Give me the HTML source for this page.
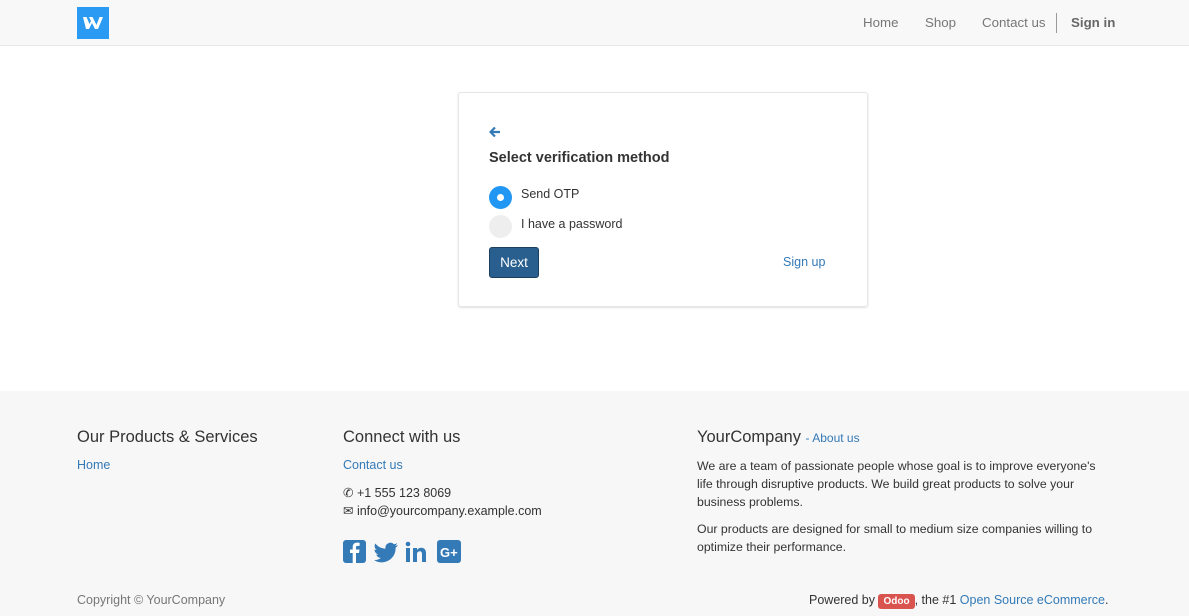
<!DOCTYPE html>
<html><head><style>
*{box-sizing:border-box;margin:0;padding:0}
body{width:1189px;height:616px;overflow:hidden;font-family:"Liberation Sans",sans-serif;font-size:12.5px;color:#333;background:#fff;position:relative}
a{color:#337ab7;text-decoration:none}
.hdr{position:absolute;left:0;top:0;width:1189px;height:46px;background:#f8f8f8;border-bottom:1px solid #e7e7e7}
.nav{position:absolute;top:15px;font-size:13.3px;color:#777}
.card{position:absolute;left:458px;top:92px;width:410px;height:215px;border:1px solid #e5e5e5;border-radius:3px;box-shadow:0 1px 2px rgba(0,0,0,.12)}
.radio{position:absolute;width:23px;height:23px;border-radius:50%}
.ft{position:absolute;left:0;top:391px;width:1189px;height:225px;background:#f7f7f7}
.abs{position:absolute}
h4{font-weight:normal;font-size:16.5px;color:#333;position:absolute}
</style></head><body>
<div class="hdr">
<svg class="abs" style="left:77px;top:7px" width="32" height="32" viewBox="0 0 32 32"><rect width="32" height="32" fill="#2b9af3"/><path d="M6 10h3.500l3 7 1.500-3-2-4h3.500l4 8 3-8H26l-5 12h-3l-3-6-3 6H9z" fill="#fff"/></svg>
<span class="nav" style="left:863px">Home</span>
<span class="nav" style="left:925px">Shop</span>
<span class="nav" style="left:982px">Contact us</span>
<div class="abs" style="left:1056px;top:13px;width:1px;height:20px;background:#999"></div>
<span class="nav" style="left:1071px;font-weight:bold;color:#666">Sign in</span>
</div>
<div class="card">
<svg class="abs" style="left:30px;top:33px" width="12" height="12" viewBox="0 0 12 12"><path d="M11 6H2M6 1.500 1.500 6 6 10.500" stroke="#337ab7" stroke-width="2.200" fill="none"/></svg>
<div class="abs" style="left:30px;top:57px;font-size:14.5px;font-weight:bold">Select verification method</div>
<div class="radio" style="left:30px;top:93px;background:#2196f3"><div class="abs" style="left:8px;top:8px;width:7px;height:7px;border-radius:50%;background:#fff"></div></div>
<div class="abs" style="left:62px;top:94px">Send OTP</div>
<div class="radio" style="left:30px;top:122px;background:#eee"></div>
<div class="abs" style="left:62px;top:124px">I have a password</div>
<div class="abs" style="left:30px;top:154px;width:50px;height:31px;background:#285f8f;border:1px solid #1d3f5e;border-radius:3px;color:#fff;text-align:center;line-height:29px;font-size:13.5px">Next</div>
<a class="abs" style="left:324px;top:162px">Sign up</a>
</div>
<div class="ft">
<h4 style="left:77px;top:37px">Our Products &amp; Services</h4>
<a class="abs" style="left:77px;top:67px">Home</a>
<h4 style="left:343px;top:37px">Connect with us</h4>
<a class="abs" style="left:343px;top:67px">Contact us</a>
<div class="abs" style="left:343px;top:94px">✆ +1 555 123 8069</div>
<div class="abs" style="left:343px;top:112px">✉ info@yourcompany.example.com</div>
<svg class="abs" style="left:343px;top:149px" width="120" height="24" viewBox="0 0 120 24">
<rect x="0" y="0" width="23" height="23" rx="3" fill="#337ab7"/><path d="M13 23V13h3l.5-3.500H13V7.500c0-1 .3-1.600 1.700-1.600h1.900V2.800C16 2.700 15 2.600 14 2.600c-2.600 0-4.300 1.600-4.300 4.400V9.500H7V13h2.700v10z" fill="#fff"/>
<path d="M55 5c-1 .5-2 .7-3 .8 1-.6 1.800-1.600 2.200-2.700-1 .6-2 1-3.200 1.200A5 5 0 0 0 42.500 8.700 14 14 0 0 1 32.300 3.500a5 5 0 0 0 1.500 6.600c-.8 0-1.600-.3-2.300-.6 0 2.400 1.700 4.400 4 4.900-.7.2-1.500.2-2.200.1.600 2 2.500 3.400 4.600 3.400A10 10 0 0 1 31 20.100 14 14 0 0 0 52.600 8.300V7.700C53.600 7 54.400 6.100 55 5z" fill="#337ab7"/>
<rect x="63" y="8" width="4" height="14" fill="#337ab7"/><circle cx="65" cy="4" r="2.300" fill="#337ab7"/><path d="M70 8h4v2c1-1.500 2.500-2.300 4.300-2.300 3 0 4.700 2 4.700 5.500V22h-4v-8c0-1.800-.7-2.800-2.200-2.800S74 12.300 74 14v8h-4z" fill="#337ab7"/>
<rect x="94" y="0" width="24" height="23" rx="3" fill="#337ab7"/><text x="97" y="17" font-family="Liberation Sans" font-weight="bold" font-size="13" fill="#fff">G+</text>
</svg>
<h4 style="left:697px;top:37px">YourCompany <span style="font-size:12px;color:#337ab7">- About us</span></h4>
<div class="abs" style="left:697px;top:66px;width:412px;line-height:18px;font-size:12.3px">We are a team of passionate people whose goal is to improve everyone's life through disruptive products. We build great products to solve your business problems.</div>
<div class="abs" style="left:697px;top:129px;width:412px;line-height:18px;font-size:12.3px">Our products are designed for small to medium size companies willing to optimize their performance.</div>
<div class="abs" style="left:77px;top:202px;color:#777">Copyright © YourCompany</div>
<div class="abs" style="left:809px;top:202px">Powered by <span style="background:#d9534f;color:#fff;font-size:10px;font-weight:bold;padding:2px 5px;border-radius:3px">Odoo</span>, the #1 <a>Open Source eCommerce</a>.</div>
</div>
</body></html>
